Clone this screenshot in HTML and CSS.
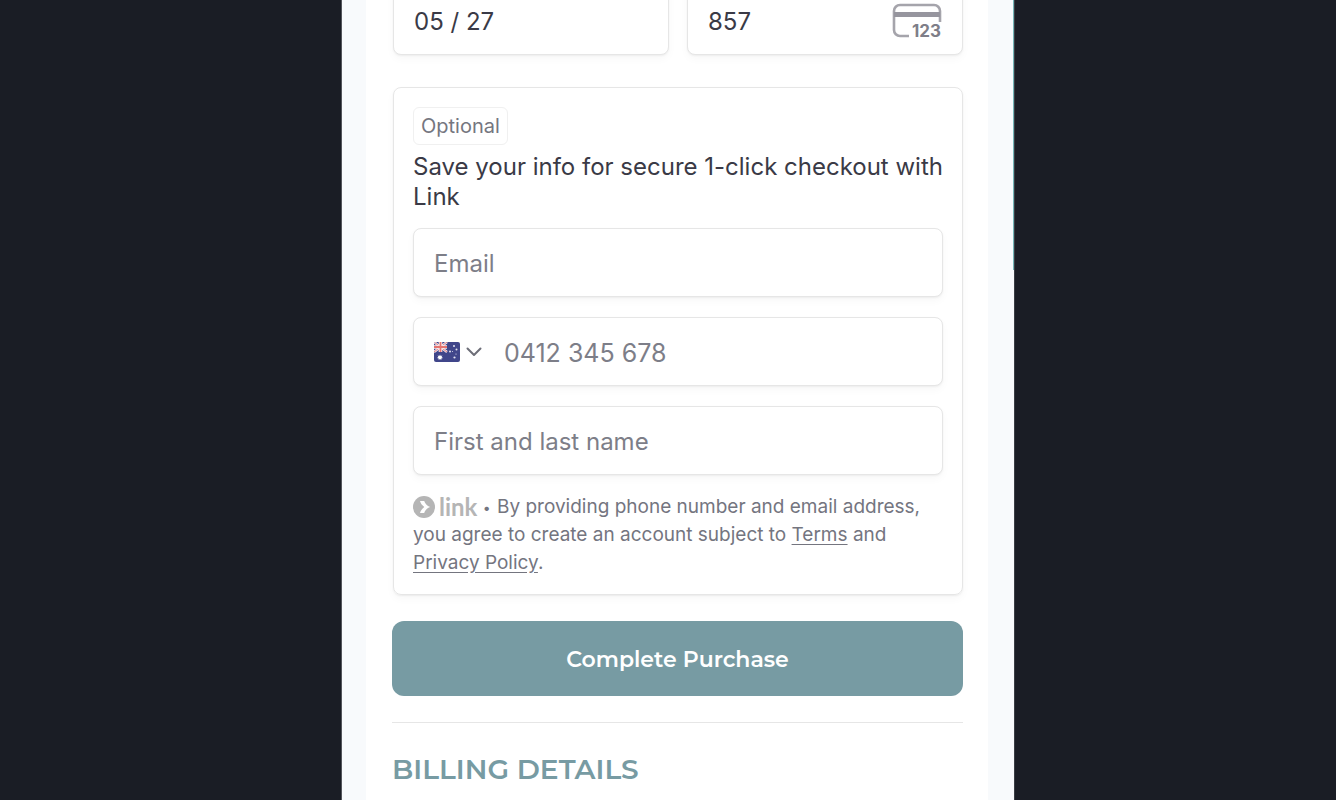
FILE: index.html
```
<!DOCTYPE html>
<html lang="en">
<head>
<meta charset="utf-8">
<meta name="viewport" content="width=device-width, initial-scale=1">
<title>Checkout</title>
<link rel="stylesheet" href="styles.css">
</head>
<body>
<div class="device">
  <div class="scroll-progress"></div>
  <main class="panel">
    <form class="checkout">
      <div class="card-row">
        <input class="field" type="text" aria-label="Expiration date" value="05 / 27">
        <div class="field field-group cvc">
          <input class="bare" type="text" aria-label="Security code" value="857">
          <svg class="cvc-icon" viewBox="0 0 50 36" aria-hidden="true">
            <path d="M17 33H8a6 6 0 0 1-6-6V8a6 6 0 0 1 6-6h34a6 6 0 0 1 6 6v11" fill="none" stroke="#a5a4ab" stroke-width="2.600"/>
            <path d="M2 9h46v5H2z" fill="#96959e"/>
            <text x="20" y="34" class="cvc-digits">123</text>
          </svg>
        </div>
      </div>

      <section class="link-card">
        <span class="badge">Optional</span>
        <h2 class="link-title">Save your info for secure 1-click checkout with Link</h2>
        <div class="link-fields">
          <input class="field" type="email" aria-label="Email" placeholder="Email">
          <div class="field field-group phone-field">
            <label class="country">
              <svg class="flag" viewBox="0 0 26 20" aria-hidden="true">
                <clipPath id="flag-shape"><rect width="26" height="20" rx="2"/></clipPath>
                <g clip-path="url(#flag-shape)">
                  <path fill="#40468a" d="M0 0h26v20H0z"/>
                  <path d="M0 0l13 10M13 0L0 10" stroke="#f3e9ef" stroke-width="2.400"/>
                  <path d="M0 0l13 10M13 0L0 10" stroke="#e07f82" stroke-width="1"/>
                  <path d="M6.500 0v10M0 5h13" stroke="#f8eef1" stroke-width="3.600"/>
                  <path d="M6.500 0v10M0 5h13" stroke="#e5736f" stroke-width="1.800"/>
                  <path fill="#fff" d="M6 12.500l.7 1.500 1.700-.4-.8 1.500 1.400 1-1.700.3v1.700L6 16.900l-1.300 1.200v-1.700L3 16.100l1.400-1-.8-1.500 1.700.4z"/>
                  <g fill="#e3e4f1"><circle cx="20" cy="4" r="1"/><circle cx="16" cy="9.500" r="1"/><circle cx="22.500" cy="7.500" r="1"/><circle cx="18.500" cy="9.500" r=".5"/><circle cx="22" cy="12" r=".6"/><circle cx="20.500" cy="15.500" r="1.100"/></g>
                </g>
              </svg>
              <svg class="chevron" viewBox="0 0 16 10" aria-hidden="true"><path d="M1.500 1.500L8 8l6.500-6.500" fill="none" stroke="#6d6e78" stroke-width="2" stroke-linecap="round" stroke-linejoin="round"/></svg>
              <select class="country-select" aria-label="Country"><option>Australia</option><option>New Zealand</option></select>
            </label>
            <input class="bare phone" type="tel" aria-label="Phone number" placeholder="0412 345 678">
          </div>
          <input class="field" type="text" aria-label="Full name" placeholder="First and last name">
        </div>
        <p class="legal">
          <span class="link-logo"><svg class="link-mark" viewBox="0 0 22 22" aria-hidden="true"><circle cx="11" cy="11" r="11" fill="#b5b5b5"/><path d="M7 5h4.200c.8 2.600 2.800 4.800 6 6-3.200 1.200-5.200 3.400-6 6H7c.5-2.200 2-4.200 4.300-6C9 9.200 7.500 7.200 7 5z" fill="#fff"/></svg><span class="link-word">link</span></span>
          <span class="dot">•</span>
          By providing phone number and email address, you agree to create an account subject to <a href="#terms">Terms</a> and <a href="#privacy">Privacy Policy</a>.
        </p>
      </section>

      <button class="submit" type="submit">Complete Purchase</button>
      <hr class="rule">
      <h1 class="section-title">BILLING DETAILS</h1>
    </form>
  </main>
</div>
</body>
</html>
```
FILE: styles.css
```
* {
  box-sizing: border-box;
}

body {
  margin: 0;
  height: 100vh;
  overflow: hidden;
  background: #1a1d25;
  font-family: Inter, "Liberation Sans", sans-serif;
  color: #3a3a46;
}

.device {
  position: relative;
  width: 100%;
  max-width: 674px;
  min-height: 100vh;
  margin: 0 auto;
  left: 10px;
  padding: 0 26px 0 24px;
  border-left: 1px solid #54565c;
  border-right: 1px solid #3a3d44;
  background: #f8fafc;
}

.scroll-progress {
  position: absolute;
  top: 0;
  right: 0;
  width: 1px;
  height: 270px;
  background: #74b5b8;
}

.panel {
  min-height: 100vh;
  padding: 0 25px 0 26px;
  background: #fff;
}

.checkout {
  display: flex;
  flex-direction: column;
}

.card-row {
  display: grid;
  grid-template-columns: minmax(0, 1fr) minmax(0, 1fr);
  gap: 18px;
  margin: -14px 0 32px 1px;
}

.field {
  width: 100%;
  height: 69px;
  padding: 2px 20px 0;
  border: 1px solid #e6e6e6;
  border-radius: 8px;
  background: #fff;
  box-shadow: 0 1px 2px rgba(0, 0, 0, 0.05), 0 4px 8px rgba(0, 0, 0, 0.03);
  color: #3a3a46;
  font: 400 24px/32px Inter, "Liberation Sans", sans-serif;
}

.field-group {
  display: flex;
  align-items: center;
}

.cvc,
.phone-field {
  padding-top: 0;
}

.bare {
  flex: 1;
  min-width: 0;
  padding: 2px 0 0;
  border: 0;
  outline: 0;
  background: none;
  color: inherit;
  font: inherit;
}

.phone {
  font-size: 25px;
}

::placeholder {
  color: #7d7e88;
  opacity: 1;
}

.cvc-icon {
  width: 50px;
  height: 36px;
  overflow: visible;
}

.cvc-digits {
  fill: #7e7e88;
  font: 700 17px Inter, sans-serif;
}

.link-card {
  margin-left: 1px;
  padding: 19px 19px 17px;
  border: 1px solid #e6e6e6;
  border-radius: 8px;
  box-shadow: 0 1px 2px rgba(0, 0, 0, 0.06), 0 4px 8px rgba(0, 0, 0, 0.03);
}

.badge {
  display: inline-block;
  padding: 4px 7px;
  border: 1px solid #f0f0f0;
  border-radius: 6px;
  color: #757680;
  font-size: 20px;
  line-height: 28px;
}

.link-title {
  margin: 7px 0 16px;
  font-size: 24px;
  font-weight: 400;
  line-height: 30px;
}

.link-fields {
  display: grid;
  gap: 20px;
}

.country {
  position: relative;
  display: flex;
  align-items: center;
  gap: 6px;
  margin-right: 22px;
}

.flag {
  width: 26px;
  height: 20px;
}

.chevron {
  width: 16px;
  height: 10px;
}

.country-select {
  position: absolute;
  inset: 0;
  width: 100%;
  opacity: 0;
}

.legal {
  margin: 18px 0 0;
  color: #74757f;
  font-size: 19px;
  line-height: 28px;
}

.legal a {
  color: inherit;
  text-underline-offset: 3px;
}

.link-logo {
  display: inline-flex;
  align-items: center;
  gap: 4px;
  height: 22px;
  vertical-align: text-bottom;
}

.link-mark {
  width: 22px;
  height: 22px;
}

.link-word {
  color: #b5b5b5;
  font: 700 24px/22px Lato, sans-serif;
}

.dot {
  margin-right: 1px;
  font-size: 14px;
  line-height: 20px;
}

.submit {
  height: 75px;
  margin: 26px 0;
  padding: 2px 0 0;
  border: 0;
  border-radius: 12px;
  background: #779ba3;
  color: #fff;
  font: 600 22px/28px Montserrat, Inter, sans-serif;
}

.rule {
  width: 100%;
  height: 1px;
  margin: 0;
  border: 0;
  background: #e6e6e6;
}

.section-title {
  margin: 28px 0 0;
  color: #779ba3;
  font: 600 28px/36px Montserrat, Inter, sans-serif;
}
```
